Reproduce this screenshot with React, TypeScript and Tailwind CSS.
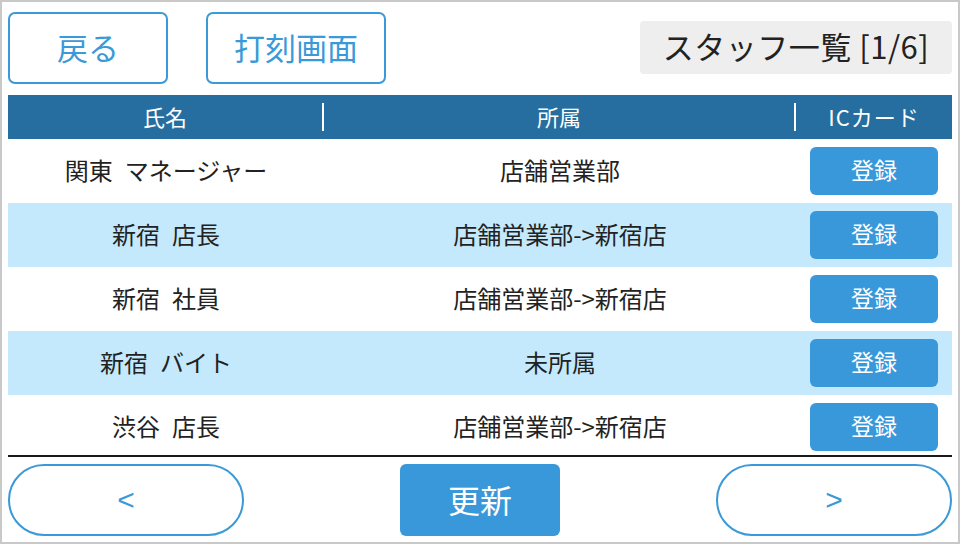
import React from "react";

const rows = [
  { name: "関東 マネージャー", dept: "店舗営業部" },
  { name: "新宿 店長", dept: "店舗営業部->新宿店" },
  { name: "新宿 社員", dept: "店舗営業部->新宿店" },
  { name: "新宿 バイト", dept: "未所属" },
  { name: "渋谷 店長", dept: "店舗営業部->新宿店" },
];

export default function App() {
  return (
    <div
      className="w-[960px] h-[544px] bg-white border-2 border-[#c8c8c8] flex flex-col overflow-hidden"
      style={{ fontFamily: '"Noto Sans CJK JP", "Noto Sans", sans-serif' }}
    >
      <div className="flex items-start pl-[6px] pr-[6px] pt-[10px] h-[93px]">
        <button className="w-[160px] h-[72px] border-2 border-[#3a99d8] rounded-[7px] text-[#3a99d8] text-[31px] flex items-center justify-center pb-[2px]">
          戻る
        </button>
        <button className="ml-[38px] w-[180px] h-[72px] border-2 border-[#3a99d8] rounded-[7px] text-[#3a99d8] text-[31px] flex items-center justify-center pb-[2px]">
          打刻画面
        </button>
        <div className="ml-auto mt-[9px] w-[312px] h-[53px] bg-[#eeeeee] rounded-[4px] flex items-center justify-center text-[31px] text-[#222222] tracking-[0.5px] pb-[2px]">
          スタッフ一覧 [1/6]
        </div>
      </div>
      <div className="mx-[6px] flex-1 flex flex-col">
        <div className="h-[44px] bg-[#256e9f] flex items-center text-white text-[22px]">
          <div className="w-[314px] text-center pb-[2px]">氏名</div>
          <div className="w-[2px] h-[28px] bg-white" />
          <div className="w-[470px] text-center pb-[2px]">所属</div>
          <div className="w-[2px] h-[28px] bg-white" />
          <div className="flex-1 text-center tracking-[1px] pb-[2px]">ICカード</div>
        </div>
        {rows.map((r, i) => (
          <div
            key={i}
            className={`h-[64px] flex items-center text-[24px] text-[#222222] ${i % 2 === 1 ? "bg-[#c5e9fc]" : "bg-white"}`}
          >
            <div className="w-[316px] text-center pb-[3px] whitespace-pre">{r.name.replace(" ", "\u2002")}</div>
            <div className="w-[472px] text-center pb-[3px]">{r.dept}</div>
            <div className="flex-1 flex justify-center">
              <button className="w-[128px] h-[48px] bg-[#3898da] rounded-[6px] text-white text-[23px] pb-[3px]">
                登録
              </button>
            </div>
          </div>
        ))}
        <div className="h-[2px] bg-[#1a1a1a] -mt-[4px]" />
        <div className="flex items-center justify-between pt-[7px]">
          <button
            className="w-[236px] h-[72px] border-2 border-[#3a99d8] rounded-full text-[#3a99d8] text-[30px] flex items-center justify-center pb-[2px]"
            style={{ fontFamily: '"Liberation Sans", sans-serif' }}
          >
            &lt;
          </button>
          <button className="w-[160px] h-[72px] bg-[#3898da] rounded-[6px] text-white text-[32px] flex items-center justify-center pb-[2px]">
            更新
          </button>
          <button
            className="w-[236px] h-[72px] border-2 border-[#3a99d8] rounded-full text-[#3a99d8] text-[30px] flex items-center justify-center pb-[2px]"
            style={{ fontFamily: '"Liberation Sans", sans-serif' }}
          >
            &gt;
          </button>
        </div>
      </div>
    </div>
  );
}
